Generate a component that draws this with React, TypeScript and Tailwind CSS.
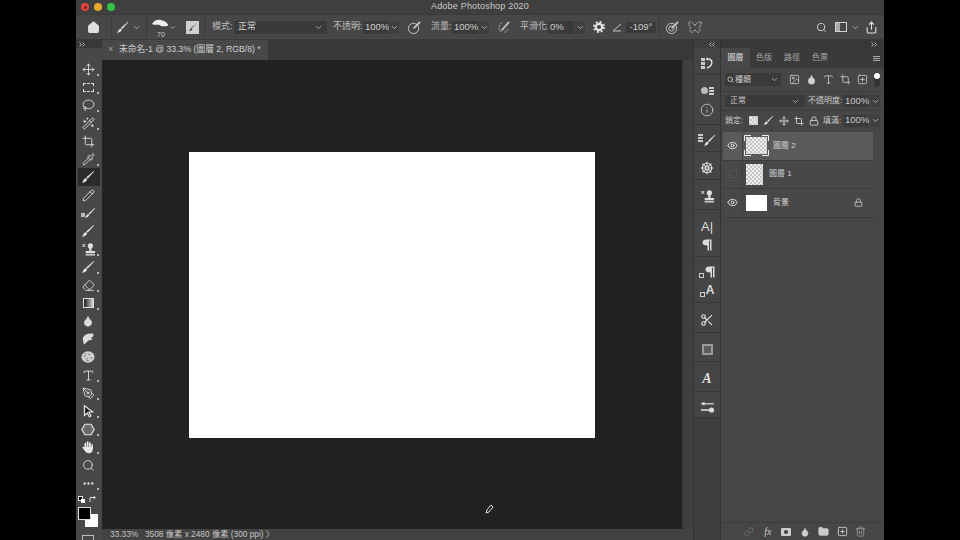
import { ReactNode } from 'react';
import {
  Move, Lasso, WandSparkles, Crop, Pipette, Pencil, Eraser, Droplet, Type, PenTool,
  Search, Ellipsis, ChevronDown, Home, Share, ShipWheel,
  Eye, Lock, Image, Folder, Trash2, Link, Scissors, Info, SquarePlus,
} from 'lucide-react';

const font = "font-['Liberation_Sans','Noto_Sans_CJK_TC',sans-serif]";

function Brush({ size = 14 }: { size?: number }) {
  return (
    <svg width={size} height={size} viewBox="0 0 16 16" fill="#e4e4e4">
      <path d="M14.5 1 L15 1.6 L7.5 10 L6 8.6 Z" />
      <path d="M5.4 9.2 L7 10.8 C6.4 13 4 14.4 1 14.6 C2.6 13.4 2.6 10.4 5.4 9.2 Z" />
    </svg>
  );
}

function Stamp() {
  return (
    <svg width="15" height="15" viewBox="0 0 16 16" fill="#e0e0e0">
      <circle cx="10" cy="4" r="2.8" />
      <rect x="8.8" y="6" width="2.4" height="3.5" />
      <rect x="5" y="9.5" width="10" height="2.6" rx="0.6" />
      <rect x="5" y="13" width="10" height="1.4" />
      <path d="M1 2 L2 2 L3 3 L4 2 L5 2 L3.6 3.6 L5 5.2 L4 5.2 L3 4.2 L2 5.2 L1 5.2 L2.4 3.6 Z" />
    </svg>
  );
}

function Smudge() {
  return (
    <svg width="14" height="14" viewBox="0 0 16 16" fill="#dcdcdc">
      <path d="M3 14 C3 10 1 8 3 5 C5 2 10 1 14 2 C15 5 13 6 11 7 L13 8 C12 10 9 9 8 10 C7 11 6 13 3 14 Z" />
    </svg>
  );
}

function Sponge() {
  return (
    <svg width="14" height="14" viewBox="0 0 16 16">
      <ellipse cx="8" cy="8" rx="7.5" ry="6.5" fill="#d0d0d0" />
      <path d="M3 7h3M8 5h3M5 10h3M10 9h3M4 4.5h2M6 12h3" stroke="#777" strokeWidth="1" />
    </svg>
  );
}

function HandIcon() {
  return (
    <svg width="14" height="14" viewBox="0 0 16 16" fill="#e6e6e6">
      <rect x="4" y="3" width="2" height="7" rx="1" />
      <rect x="6.6" y="1.5" width="2" height="8" rx="1" />
      <rect x="9.2" y="2.5" width="2" height="7" rx="1" />
      <rect x="11.8" y="4.5" width="1.8" height="6" rx="0.9" />
      <path d="M4 8 L13.6 8 L13.4 11 C13 14 11 15 9 15 C6.5 15 5.5 14 4.5 12.5 L1.6 8.8 C1.4 7.8 2.4 7.4 3 8 Z" />
    </svg>
  );
}

function Arrow() {
  return (
    <svg width="13" height="14" viewBox="0 0 16 16" fill="#222" stroke="#e4e4e4" strokeWidth="1.5">
      <path d="M3 1.5 L13 9 L8.5 9.5 L11 14 L9 15 L6.5 10.5 L3 13.5 Z" />
    </svg>
  );
}

function Marquee() {
  return <div className="w-[11px] h-[9px] border border-dashed border-[#dedede]" />;
}

function Gradient() {
  return <div className="w-[11px] h-[10px] border border-[#ddd] bg-gradient-to-r from-[#222] to-[#ddd]" />;
}

function HealBrush() {
  return (
    <span className="flex items-end">
      <span className="w-[4px] h-[4px] bg-[#bbb] mb-[2px] -mr-[1px]" />
      <Brush size={12} />
    </span>
  );
}

function GearIcon() {
  return (
    <svg width="14" height="14" viewBox="0 0 16 16" fill="none" stroke="#e6e6e6">
      <circle cx="8" cy="8" r="5.7" strokeWidth="2.2" strokeDasharray="2.2 2.28" />
      <circle cx="8" cy="8" r="3.6" strokeWidth="2.4" />
    </svg>
  );
}

const iconProps = { size: 13, color: '#e2e2e2', strokeWidth: 1.6 };

const tools: { icon: ReactNode; more?: boolean; active?: boolean }[] = [
  { icon: <Move {...iconProps} />, more: true },
  { icon: <Marquee />, more: true },
  { icon: <Lasso {...iconProps} />, more: true },
  { icon: <WandSparkles {...iconProps} />, more: true },
  { icon: <Crop {...iconProps} /> },
  { icon: <Pipette {...iconProps} />, more: true },
  { icon: <Brush />, active: true },
  { icon: <Pencil {...iconProps} /> },
  { icon: <HealBrush /> },
  { icon: <Brush /> },
  { icon: <Stamp />, more: true },
  { icon: <Brush />, more: true },
  { icon: <Eraser {...iconProps} />, more: true },
  { icon: <Gradient />, more: true },
  { icon: <Droplet size={12} color="#ddd" fill="#ddd" /> },
  { icon: <Smudge /> },
  { icon: <Sponge /> },
  { icon: <Type {...iconProps} />, more: true },
  { icon: <PenTool {...iconProps} />, more: true },
  { icon: <Arrow />, more: true },
  { icon: <svg width="14" height="13" viewBox="0 0 16 14" fill="#6a6a6a" stroke="#e2e2e2" strokeWidth="1.4"><path d="M4.5 1 H11.5 L15 7 L11.5 13 H4.5 L1 7 Z" /></svg>, more: true },
  { icon: <HandIcon />, more: true },
  { icon: <Search {...iconProps} /> },
  { icon: <Ellipsis size={13} color="#ddd" strokeWidth={2.4} />, more: true },
];

function Chev({ className = '' }: { className?: string }) {
  return <ChevronDown size={9} color="#c4c4c4" strokeWidth={2} className={className} />;
}

function Sep() {
  return <div className="w-px h-[22px] bg-[#3a3a3a]" />;
}

function Label({ children, className = '' }: { children: ReactNode; className?: string }) {
  return <span className={`text-[9px] text-[#bdbdbd] whitespace-nowrap ${className}`}>{children}</span>;
}

function Field({ children, w }: { children: ReactNode; w: string }) {
  return (
    <div className={`${w} h-[13px] bg-[#3a3a3a] flex items-center pl-[2px] text-[9.5px] text-[#d0d0d0]`}>
      {children}
    </div>
  );
}

function ChevBox({ className = '' }: { className?: string }) {
  return (
    <div className={`w-[10px] h-[13px] bg-[#3f3f3f] flex items-center justify-center ${className}`}>
      <Chev />
    </div>
  );
}

function Airbrush() {
  return (
    <svg width="15" height="15" viewBox="0 0 16 16" fill="none" stroke="#c8c8c8" strokeWidth="1">
      <circle cx="7" cy="9" r="5.5" />
      <path d="M7 9 L14 2" strokeWidth="1.8" />
    </svg>
  );
}

function SmoothBrush() {
  return (
    <svg width="15" height="15" viewBox="0 0 16 16" fill="none" stroke="#bdbdbd" strokeWidth="1">
      <path d="M6 3 A6 6 0 0 0 6 13 M13 10 A6 6 0 0 1 9 13" strokeDasharray="2 1" />
      <path d="M6 11 L14 2" strokeWidth="2" />
    </svg>
  );
}

function TargetBrush() {
  return (
    <svg width="15" height="15" viewBox="0 0 16 16" fill="none" stroke="#c8c8c8" strokeWidth="1">
      <circle cx="7" cy="9" r="5.5" />
      <circle cx="7" cy="9" r="2.8" />
      <path d="M7 9 L14 2" strokeWidth="1.8" />
    </svg>
  );
}

function Butterfly() {
  return (
    <svg width="16" height="15" viewBox="0 0 16 16" fill="none" stroke="#c0c0c0" strokeWidth="1">
      <path d="M8 6 C6 2 3 2 1.5 2 C1 5 2 7 4 8 C2 9 2 12 4 13 C6 13.5 7 12 8 10 C9 12 10 13.5 12 13 C14 12 14 9 12 8 C14 7 15 5 14.5 2 C13 2 10 2 8 6 Z" strokeDasharray="2 1" />
    </svg>
  );
}

function OptionsBar() {
  return (
    <div className="h-[26px] bg-[#474747] flex items-center border-y border-[#3a3a3a]">
      <div className="w-[35px] flex justify-center">
        <Home size={13} color="#e0e0e0" fill="#e0e0e0" />
      </div>
      <Sep />
      <div className="w-[34px] flex items-center justify-end gap-[3px] pr-[5px]">
        <Brush size={13} />
        <Chev />
      </div>
      <Sep />
      <div className="relative w-[30px] h-full flex items-start pt-[4px] pl-[5px] gap-[1px]">
        <svg width="19" height="9" viewBox="0 0 19 9">
          <path d="M0 5 C2 1 8 -1 12 1 C15 2 18 3 19 7 C15 8 13 8 10 7 C7 5 3 7 0 5 Z" fill="#eee" />
        </svg>
        <Chev className="mt-[4px]" />
        <span className="absolute left-[10px] bottom-[1px] text-[7px] leading-none text-[#c8c8c8]">70</span>
      </div>
      <div className="w-[13px] h-[13px] bg-[#cfcfcf] flex items-center justify-center ml-[9px] mr-[5px]">
        <svg width="10" height="10" viewBox="0 0 16 16" fill="#333">
          <path d="M14 2 L6 10 L5 9 Z M5 10 L7 11 C6 14 3 14 2 14 C3 13 3 11 5 10 Z" />
        </svg>
      </div>
      <Sep />
      <Label className="ml-[7px] w-[22px]">模式:</Label>
      <div className="w-[93px] h-[13px] bg-[#3a3a3a] flex items-center justify-between px-1 text-[9px] text-[#d0d0d0]">
        <span>正常</span>
        <Chev />
      </div>
      <Label className="ml-[6px] w-[30px]">不透明:</Label>
      <Field w="w-[25px]">100%</Field>
      <ChevBox className="ml-[1px]" />
      <div className="ml-[7px] w-[17px] flex justify-center"><Airbrush /></div>
      <Label className="ml-[8px] w-[21px]">流量:</Label>
      <Field w="w-[26px]">100%</Field>
      <ChevBox className="ml-[1px]" />
      <div className="ml-[6px] w-[17px] flex justify-center"><SmoothBrush /></div>
      <Label className="ml-[8px] w-[28px]">平滑化:</Label>
      <Field w="w-[26px]">0%</Field>
      <ChevBox className="ml-[1px]" />
      <div className="ml-[6px] w-[15px] flex justify-center"><GearIcon /></div>
      <div className="ml-[5px] w-[12px] flex justify-center">
        <svg width="10" height="9" viewBox="0 0 10 9" fill="none" stroke="#bdbdbd">
          <path d="M9 1 L1 8 L9 8" />
        </svg>
      </div>
      <div className="ml-[3px] w-[30px] h-[11px] bg-[#3a3a3a] text-[9.5px] text-[#d0d0d0] flex items-center justify-center">
        -109°
      </div>
      <div className="ml-[3px]"><Sep /></div>
      <div className="ml-[5px] w-[15px] flex justify-center"><TargetBrush /></div>
      <div className="ml-[7px] w-[16px] flex justify-center"><Butterfly /></div>
      <div className="ml-auto flex items-center">
        <Search size={11} color="#e0e0e0" strokeWidth={1.8} />
        <div className="ml-[8px] w-[12px] h-[10px] border border-[#d0d0d0] flex">
          <div className="w-[4px] bg-[#a8a8a8]" />
        </div>
        <Chev className="ml-[4px]" />
        <Share size={13} color="#e0e0e0" className="ml-[5px] mr-[6px]" />
      </div>
    </div>
  );
}

function Collapse({ left }: { left?: boolean }) {
  return (
    <svg width="6" height="5" viewBox="0 0 6 5" fill="none" stroke="#b0b0b0" className={left ? 'rotate-180' : ''}>
      <path d="M0.5 0.5 L2.5 2.5 L0.5 4.5 M3.5 0.5 L5.5 2.5 L3.5 4.5" />
    </svg>
  );
}

function LeftToolbar() {
  return (
    <div className="w-[26px] bg-[#484848] flex flex-col pr-[3px]">
      <div className="h-[8px] -mr-[3px] bg-[#383838] flex items-center pl-[3px] shrink-0"><Collapse /></div>
      <div className="h-[12px] shrink-0" />
      {tools.map((t, i) => (
        <div
          key={i}
          className={`relative h-[18px] shrink-0 ml-[2px] -mr-[1px] flex items-center justify-center ${t.active ? 'bg-[#2b2b2b]' : ''}`}
        >
          <span className="flex items-center justify-center -translate-x-[1px]">{t.icon}</span>
          {t.more && <span className="absolute right-[1px] bottom-[2px] w-[2px] h-[2px] bg-[#bbb]" />}
        </div>
      ))}
      <div className="relative h-[48px] shrink-0">
        <div className="absolute left-[2px] top-[4px] w-[5px] h-[5px] bg-black border border-[#ddd]" />
        <div className="absolute left-[5px] top-[7px] w-[4px] h-[4px] bg-white" />
        <svg className="absolute left-[13px] top-[4px]" width="7" height="7" viewBox="0 0 7 7" fill="none" stroke="#ddd">
          <path d="M1 6 V1.5 H6 M4.5 0 L6.5 1.5 L4.5 3" />
        </svg>
        <div className="absolute left-[9px] top-[22px] w-[13px] h-[13px] bg-white" />
        <div className="absolute left-[2px] top-[15px] w-[13px] h-[13px] bg-black border border-[#ddd]" />
        <div className="absolute left-[6px] top-[43px] w-[12px] h-[9px] border border-[#bbb]" />
      </div>
    </div>
  );
}

function DocumentArea() {
  return (
    <div className="flex-1 flex flex-col min-w-0">
      <div className="h-[20px] bg-[#383838] shrink-0 flex">
        <div className="w-[166px] bg-[#484848] flex items-center text-[8.7px] text-[#cfcfcf] whitespace-nowrap">
          <span className="ml-[6px] mr-[6px] text-[#aaa]">×</span>
          未命名-1 @ 33.3% (圖層 2, RGB/8) *
        </div>
      </div>
      <div className="flex-1 flex min-h-0">
        <div className="relative flex-1 bg-[#222222] pl-[87px] pt-[92px]">
          <div className="w-[406px] h-[286px] bg-white" />
          <svg className="absolute left-[383px] top-[444px]" width="9" height="10" viewBox="0 0 9 10" fill="none" stroke="#ddd">
            <path d="M6 1 L8 3 L4 8 L1 9 L2 6 Z" />
          </svg>
        </div>
        <div className="w-[11px] bg-[#3f3f3f] border-l border-[#333]" />
      </div>
      <div className="h-[11px] bg-[#424242] shrink-0 flex items-center text-[8.3px] text-[#c4c4c4] whitespace-nowrap pl-[8px]">
        <span className="w-[35px]">33.33%</span>
        <span>3508 像素 x 2480 像素 (300 ppi) 〉</span>
      </div>
    </div>
  );
}

function Grid3() {
  return (
    <div className="flex flex-col gap-[1px]">
      <span className="w-[5px] h-[2px] bg-[#ccc]" />
      <span className="w-[5px] h-[2px] bg-[#ccc]" />
      <span className="w-[5px] h-[2px] bg-[#ccc]" />
    </div>
  );
}

function History() {
  return (
    <div className="flex items-center gap-[1px]">
      <div className="flex flex-col gap-[1px]">
        <span className="w-[4px] h-[3px] bg-[#ccc]" />
        <span className="w-[4px] h-[3px] bg-[#ccc]" />
        <span className="w-[4px] h-[3px] bg-[#ccc]" />
      </div>
      <svg width="8" height="12" viewBox="0 0 8 12" fill="none" stroke="#ddd" strokeWidth="1.4">
        <path d="M3 2 H1 M2 1 L0.5 2 L2 3 M3 2 C7 3 7 9 1 11" />
      </svg>
    </div>
  );
}

function Pilcrow() {
  return (
    <svg width="10" height="12" viewBox="0 0 10 12" fill="#dcdcdc">
      <path d="M9.5 0.5 V11.5 H8 V1.8 H7 V11.5 H5.5 V6.5 C2 6.5 0.5 5 0.5 3.4 C0.5 1.8 2 0.5 4.5 0.5 Z" />
    </svg>
  );
}

function DockGroup({ h, children }: { h: string; children: ReactNode }) {
  return (
    <div className={`${h} shrink-0 pt-[4px] flex flex-col items-center justify-center bg-[#454545] border-b border-[#383838]`}>
      {children}
    </div>
  );
}

function Dock() {
  return (
    <div className="w-[28px] flex flex-col bg-[#3e3e3e] border-x border-[#333333]">
      <div className="h-[8px] shrink-0 flex justify-end items-center pr-[5px]"><Collapse left /></div>
      <DockGroup h="h-[27px]"><History /></DockGroup>
      <DockGroup h="h-[50px]">
        <div className="flex items-center gap-[1px] mb-[8px]">
          <div className="w-[7px] h-[7px] rounded-full bg-[#bbb]" />
          <Grid3 />
        </div>
        <Info size={14} color="#d8d8d8" strokeWidth={1.3} />
      </DockGroup>
      <DockGroup h="h-[27px]">
        <div className="flex items-start">
          <Grid3 />
          <Brush size={13} />
        </div>
      </DockGroup>
      <DockGroup h="h-[28px]"><ShipWheel size={14} color="#dedede" strokeWidth={1.8} /></DockGroup>
      <DockGroup h="h-[30px]"><Stamp /></DockGroup>
      <DockGroup h="h-[47px]">
        <span className="text-[13px] leading-[15px] text-[#dcdcdc] mb-[5px]">A|</span>
        <Pilcrow />
      </DockGroup>
      <DockGroup h="h-[46px]">
        <div className="flex items-end gap-[1px] mb-[6px]">
          <span className="w-[5px] h-[5px] border border-[#ccc]" />
          <Pilcrow />
        </div>
        <div className="flex items-end gap-[1px]">
          <span className="w-[5px] h-[5px] border border-[#ccc]" />
          <span className="text-[12px] leading-[13px] font-bold text-[#dcdcdc]">A</span>
        </div>
      </DockGroup>
      <DockGroup h="h-[30px]"><Scissors size={14} color="#e0e0e0" strokeWidth={2} /></DockGroup>
      <DockGroup h="h-[29px]">
        <div className="w-[11px] h-[11px] border-2 border-[#999] bg-[#5c5c5c]" />
      </DockGroup>
      <DockGroup h="h-[30px]">
        <span className="font-['Liberation_Serif',serif] italic font-bold text-[14px] leading-none text-[#dcdcdc]">A</span>
      </DockGroup>
      <DockGroup h="h-[26px]">
        <svg width="15" height="12" viewBox="0 0 15 12" fill="#dcdcdc">
          <rect x="3" y="2.2" width="11" height="1.2" />
          <path d="M0.5 2.8 L4.5 0.8 V4.8 Z" />
          <rect x="1" y="8.2" width="8" height="1.6" />
          <circle cx="11.5" cy="9" r="2.6" />
        </svg>
      </DockGroup>
    </div>
  );
}

const checker =
  'bg-[repeating-conic-gradient(#c4c4c4_0_25%,#eeeeee_0_50%)] bg-[length:4px_4px]';

function Corners() {
  return (
    <svg className="absolute -left-[2px] -top-[2px]" width="25" height="21" viewBox="0 0 25 21" fill="none" stroke="#eeeeee">
      <path d="M0.5 6 V0.5 H7 M18 0.5 H24.5 V6 M24.5 15 V20.5 H18 M7 20.5 H0.5 V15" />
    </svg>
  );
}

function LayerRow({
  name, thumb, selected, hidden, locked,
}: {
  name: string; thumb: string; selected?: boolean; hidden?: boolean; locked?: boolean;
}) {
  return (
    <div className={`h-[28.5px] flex items-center border-b border-[#3c3c3c] ${selected ? 'bg-[#5a5a5a]' : 'bg-[#484848]'}`}>
      <div className="w-[20px] h-full flex items-center justify-center border-r border-[#404040]">
        {hidden ? (
          <div className="w-[8px] h-[8px] border border-[#555555]" />
        ) : (
          <Eye size={11} color="#e4e4e4" strokeWidth={2} />
        )}
      </div>
      <div className={`ml-[3px] relative shrink-0 ${thumb}`}>
        {selected && <Corners />}
      </div>
      <span className="ml-[6px] text-[8px] text-[#d4d4d4]">{name}</span>
      {locked && <Lock size={9} color="#d4d4d4" className="ml-auto mr-[10px]" />}
    </div>
  );
}

function BottomSlot({ children }: { children: ReactNode }) {
  return <div className="w-[18.6px] flex justify-center">{children}</div>;
}

function LayersPanel() {
  const p = { size: 11, color: '#d0d0d0', strokeWidth: 1.7 };
  return (
    <div className="w-[163px] flex flex-col bg-[#464646]">
      <div className="h-[8px] bg-[#383838] flex justify-end items-center pr-[7px] shrink-0"><Collapse /></div>
      <div className="h-[20px] bg-[#3a3a3a] flex items-stretch text-[8px] text-[#a8a8a8] shrink-0">
        <div className="w-[29px] bg-[#484848] text-[#e0e0e0] flex items-center justify-center">圖層</div>
        <div className="w-[28px] flex items-center justify-center">色版</div>
        <div className="w-[28px] flex items-center justify-center">路徑</div>
        <div className="w-[28px] flex items-center justify-center">色票</div>
        <div className="ml-auto mr-[4px] flex flex-col justify-center gap-[1px]">
          <span className="w-[7px] h-px bg-[#aaa]" />
          <span className="w-[7px] h-px bg-[#aaa]" />
          <span className="w-[7px] h-px bg-[#aaa]" />
        </div>
      </div>
      <div className="h-[24px] shrink-0 flex items-center pl-[4px] border-b border-[#3c3c3c]">
        <div className="w-[56px] h-[13px] bg-[#3a3a3a] flex items-center px-[2px] text-[8px] text-[#d0d0d0]">
          <Search size={7} color="#ddd" strokeWidth={2.5} />
          <span className="ml-[1px]">種類</span>
          <Chev className="ml-auto" />
        </div>
        <div className="flex items-center gap-[6px] ml-[8px]">
          <Image {...p} />
          <Droplet {...p} fill="#d0d0d0" />
          <Type {...p} />
          <Crop {...p} />
          <SquarePlus {...p} />
        </div>
        <div className="ml-[6px] w-[6px] h-[14px] rounded-full bg-[#333] relative">
          <div className="absolute top-0 w-[6px] h-[6px] rounded-full bg-white" />
        </div>
      </div>
      <div className="h-[19px] shrink-0 flex items-center pl-[4px] border-b border-[#3c3c3c] text-[8px] text-[#c8c8c8]">
        <div className="w-[80px] h-[12px] bg-[#3a3a3a] flex items-center justify-between px-[5px]">
          <span>正常</span>
          <Chev />
        </div>
        <span className="ml-[3px] w-[35px] whitespace-nowrap">不透明度:</span>
        <div className="w-[25px] h-[12px] bg-[#3a3a3a] flex items-center pl-[2px] text-[9.5px]">100%</div>
        <ChevBox className="ml-[2px] !h-[12px]" />
      </div>
      <div className="h-[19px] shrink-0 flex items-center pl-[4px] text-[8px] text-[#c8c8c8]">
        <span className="w-[24px]">鎖定:</span>
        <div className="flex items-center gap-[5px]">
          <div className={`w-[9px] h-[9px] border border-[#ccc] ${checker}`} />
          <Brush size={11} />
          <Move size={10} color="#ddd" />
          <Crop size={10} color="#ddd" />
          <Lock size={10} color="#ddd" />
        </div>
        <span className="ml-[4px] w-[19px] whitespace-nowrap">填滿:</span>
        <div className="ml-[1px] w-[25px] h-[12px] bg-[#3a3a3a] flex items-center pl-[2px] text-[9.5px]">100%</div>
        <ChevBox className="ml-[2px] !h-[12px]" />
      </div>
      <div className="ml-[2px] mr-[11px] flex-1 flex flex-col pt-[2px]">
        <LayerRow name="圖層 2" thumb={`${checker} w-[21px] h-[17px]`} selected />
        <LayerRow name="圖層 1" thumb={`${checker} w-[17px] h-[21px]`} hidden />
        <LayerRow name="背景" thumb="bg-white w-[21px] h-[16px]" locked />
      </div>
      <div className="h-[18px] shrink-0 flex items-center justify-end pr-[14px] border-t border-[#3c3c3c]">
        <BottomSlot><Link size={10} color="#777" /></BottomSlot>
        <BottomSlot>
          <span className="font-['Liberation_Serif',serif] italic text-[10px] leading-none text-[#ccc]">fx</span>
        </BottomSlot>
        <BottomSlot>
          <div className="w-[10px] h-[8px] bg-[#ccc] rounded-[1px] flex items-center justify-center">
            <span className="w-[4px] h-[4px] rounded-full bg-[#424242]" />
          </div>
        </BottomSlot>
        <BottomSlot><Droplet size={10} color="#ccc" fill="#ccc" /></BottomSlot>
        <BottomSlot><Folder size={11} color="#ccc" fill="#ccc" /></BottomSlot>
        <BottomSlot><SquarePlus size={11} color="#ccc" /></BottomSlot>
        <BottomSlot><Trash2 size={11} color="#999" /></BottomSlot>
      </div>
    </div>
  );
}

function App() {
  return (
    <div className={`${font} w-[960px] h-[540px] bg-black flex justify-center overflow-hidden`}>
      <div className="w-[808px] h-full flex flex-col bg-[#383838]">
        <div className="relative h-[14px] bg-[#3f3f3f] shrink-0 flex items-center justify-center">
          <div className="absolute left-[5px] top-[3px] flex gap-[5px]">
            <span className="w-[8px] h-[8px] rounded-full bg-[#e0443e] flex items-center justify-center">
              <span className="w-[3px] h-[3px] rounded-full bg-[#7a1a1a]" />
            </span>
            <span className="w-[8px] h-[8px] rounded-full bg-[#e8a62c]" />
            <span className="w-[8px] h-[8px] rounded-full bg-[#35c04a]" />
          </div>
          <span className="text-[9px] text-[#c8c8c8] tracking-[0.2px]">Adobe Photoshop 2020</span>
        </div>
        <OptionsBar />
        <div className="flex-1 flex min-h-0">
          <LeftToolbar />
          <DocumentArea />
          <Dock />
          <LayersPanel />
        </div>
      </div>
    </div>
  );
}

export default App;
